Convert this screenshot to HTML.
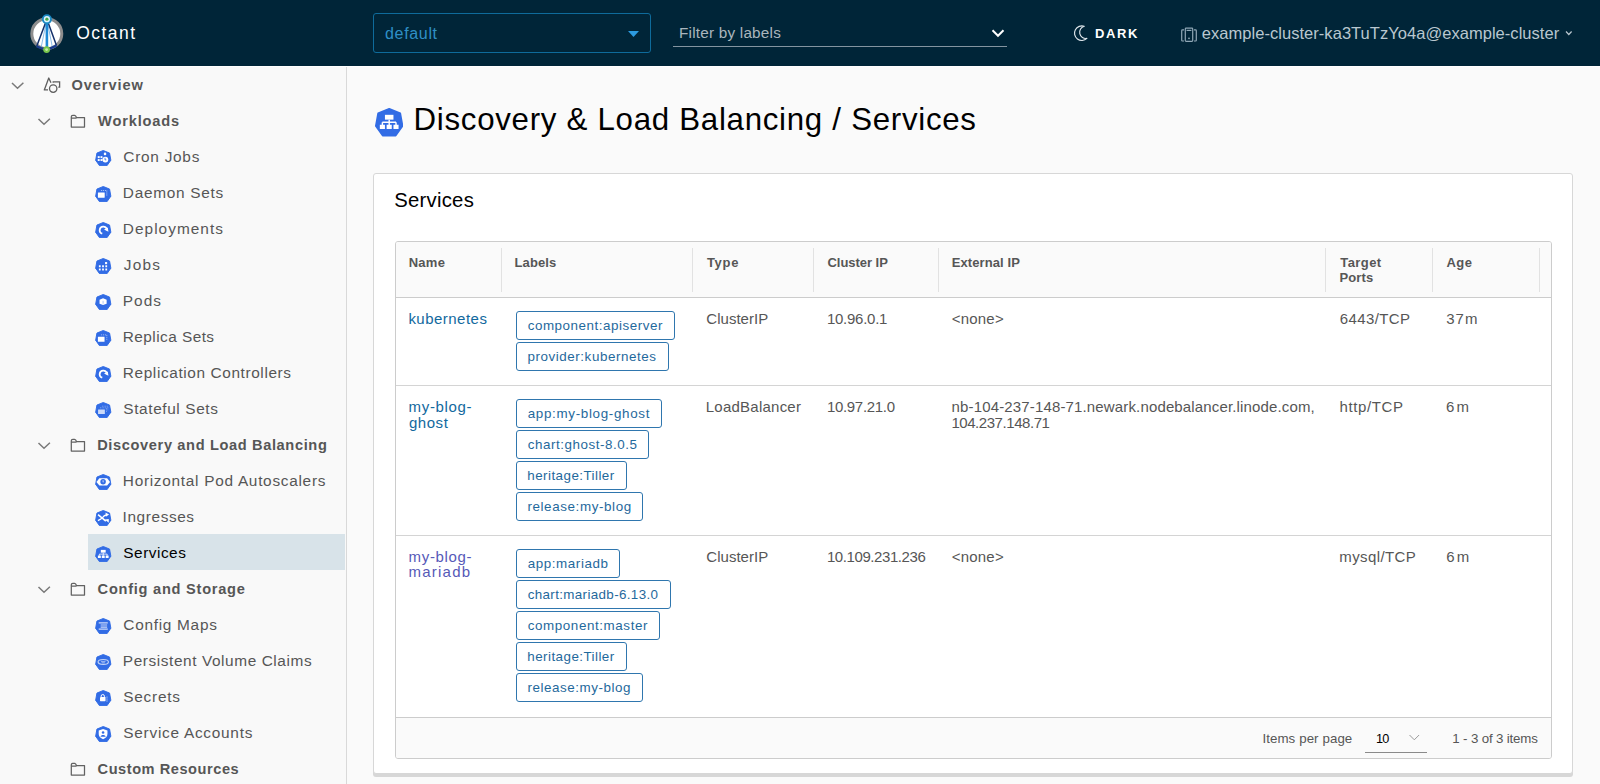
<!DOCTYPE html>
<html><head><meta charset="utf-8">
<style>
html,body{margin:0;padding:0;width:1600px;height:784px;overflow:hidden;background:#fafafa;font-family:"Liberation Sans",sans-serif;}
.ab{position:absolute;}
.t{white-space:nowrap;}
</style></head><body>
<div class="ab" style="left:0;top:0;width:1600px;height:66px;background:#002538"></div>
<svg class="ab" style="left:24px;top:8px;width:48px;height:50px" viewBox="0 0 48 50">
<circle cx="22.8" cy="25.7" r="15" fill="#fff" stroke="#8d8d8d" stroke-width="3"/>
<path d="M22.9 11.2 L17 40 M22.9 11.2 L28.5 40" stroke="#5aa0e0" stroke-width="0.7" fill="none"/>
<path d="M22.9 11.2 L12.7 38.2 M22.9 11.2 L32.5 37.6" stroke="#14316b" stroke-width="1.5" fill="none"/>
<path d="M12.7 38.2 Q22.6 44 32.5 37.6" stroke="#1a3c8c" stroke-width="2.4" fill="none"/>
<path d="M22.9 11.2 V41.4" stroke="#1f8ad6" stroke-width="2.6"/>
<circle cx="22.9" cy="11.2" r="5" fill="#1b8ac4"/>
<circle cx="22.9" cy="11.2" r="3.1" fill="#dff4ff"/>
<circle cx="22.9" cy="11.2" r="1.6" fill="#4aa84a"/>
<circle cx="22.6" cy="41.6" r="3.4" fill="#79c64c"/>
<circle cx="22.6" cy="41.6" r="1.4" fill="#c8f0a8"/>
</svg>
<div class="ab t" style="left:76.20px;top:22.44px;font-size:17.5px;line-height:22px;font-weight:normal;color:#ffffff;letter-spacing:1.462px">Octant</div>
<div class="ab" style="left:373px;top:13px;width:278px;height:40px;box-sizing:border-box;border:1px solid #0e6b9b;border-radius:3px"></div>
<div class="ab t" style="left:385.00px;top:23.86px;font-size:16px;line-height:20px;font-weight:normal;color:#2f8fc6;letter-spacing:0.668px">default</div>
<svg class="ab" style="left:627.5px;top:30.5px;width:11px;height:7px" viewBox="0 0 11 7"><path d="M0 0 H11 L5.5 6 Z" fill="#2c9be0"/></svg>
<div class="ab" style="left:673px;top:45.5px;width:334px;height:1.5px;background:#8394a0"></div>
<div class="ab t" style="left:679.05px;top:23.20px;font-size:15.3px;line-height:19px;font-weight:normal;color:#aab5bd;letter-spacing:0.208px">Filter by labels</div>
<svg class="ab" style="left:0;top:0;width:1600px;height:784px;overflow:visible;pointer-events:none"><path d="M992.5 30.3 L998 35.8 L1003.5 30.3" fill="none" stroke="#ffffff" stroke-width="2" /></svg>
<svg class="ab" style="left:1072px;top:24px;width:17px;height:19px;overflow:visible" viewBox="0 0 17 19"><path d="M12.25 2.3 A7.3 7.3 0 1 0 14.9 14.4 A6.2 6.2 0 0 1 12.25 2.3 Z" fill="none" stroke="#dfe7ec" stroke-width="1.15" stroke-linejoin="round"/></svg>
<div class="ab t" style="left:1094.90px;top:26.00px;font-size:13px;line-height:16px;font-weight:bold;color:#ffffff;letter-spacing:1.612px">DARK</div>
<svg class="ab" style="left:0;top:0;width:1600px;height:784px;overflow:visible"><g fill="none" stroke="#8fa7b6" stroke-width="1.2"><rect x="1185.3" y="28.1" width="7.4" height="13.2" rx="0.8"/><path d="M1186.6 30.4 H1191.4"/><path d="M1184 29.9 H1182.4 Q1181.7 29.9 1181.7 30.7 V40.2 Q1181.7 41 1182.4 41 H1184"/><path d="M1194 29.9 H1195.6 Q1196.3 29.9 1196.3 30.7 V40.2 Q1196.3 41 1195.6 41 H1194"/></g><circle cx="1189" cy="38.3" r="0.9" fill="#8fa7b6"/></svg>
<div class="ab t" style="left:1201.80px;top:22.53px;font-size:16.5px;line-height:21px;font-weight:normal;color:#b9c7cf;letter-spacing:0.039px">example-cluster-ka3TuTzYo4a@example-cluster</div>
<svg class="ab" style="left:0;top:0;width:1600px;height:784px;overflow:visible;pointer-events:none"><path d="M1566 31.5 L1568.8 34.5 L1571.6 31.5" fill="none" stroke="#b9c7cf" stroke-width="1.2" /></svg>
<div class="ab" style="left:0;top:66px;width:346px;height:718px;background:#f9f9f9;border-right:1px solid #d9d9d9"></div>
<div class="ab" style="left:0;top:66px;width:1600px;height:1px;background:#ffffff"></div>
<svg class="ab" style="left:0;top:0;width:1600px;height:784px;overflow:visible;pointer-events:none"><path d="M12 83 L17.5 88.3 L23.4 82.7" fill="none" stroke="#7a7a7a" stroke-width="1.5" /></svg>
<svg class="ab" style="left:40px;top:75px;width:24px;height:22px;overflow:visible" viewBox="0 0 24 22"><path d="M11 7.8 L8.75 3 L4.3 14.9 H8" fill="none" stroke="#5e5e5e" stroke-width="1.3" stroke-linejoin="round"/><path d="M13.2 7.8 V6.8 H19.6 V12.2 H18.3" fill="none" stroke="#5e5e5e" stroke-width="1.3"/><circle cx="13.2" cy="13.6" r="3.7" fill="none" stroke="#5e5e5e" stroke-width="1.3"/></svg>
<div class="ab t" style="left:71.40px;top:75.84px;font-size:14.6px;line-height:18px;font-weight:bold;color:#565656;letter-spacing:0.932px">Overview</div>
<svg class="ab" style="left:0;top:0;width:1600px;height:784px;overflow:visible;pointer-events:none"><path d="M38.5 119 L44 124.3 L49.9 118.7" fill="none" stroke="#7a7a7a" stroke-width="1.5" /></svg>
<svg class="ab" style="left:0;top:0;width:1600px;height:784px;overflow:visible;pointer-events:none"><path d="M71.3 127 V116.8 Q71.3 115.3 72.8 115.3 H74.6 Q75.8 115.3 76.5 117.5 H84.5 V127 Z M71.3 118 H76.5" fill="none" stroke="#626262" stroke-width="1.25" stroke-linejoin="round"/></svg>
<div class="ab t" style="left:98.10px;top:111.94px;font-size:14.6px;line-height:18px;font-weight:bold;color:#565656;letter-spacing:0.831px">Workloads</div>
<svg class="ab" style="left:95.2px;top:149.6px;width:16.5px;height:16.2px" viewBox="0 0 100 100"><polygon points="50,3 89,19 97,63 73,97 27,97 3,63 11,19" fill="#326ce5" stroke="#326ce5" stroke-width="6" stroke-linejoin="round"/><rect x="16" y="38" width="12" height="12" fill="#fff"/><rect x="33" y="38" width="12" height="12" fill="#fff"/><rect x="16" y="56" width="12" height="12" fill="#fff"/><rect x="33" y="56" width="12" height="12" fill="#fff"/><circle cx="61" cy="24" r="8" fill="#fff"/><circle cx="63" cy="59" r="18" fill="#fff"/><path d="M61 48v13h8" stroke="#326ce5" stroke-width="5" fill="none"/></svg>
<div class="ab t" style="left:123.30px;top:146.86px;font-size:15.4px;line-height:19px;font-weight:normal;color:#565656;letter-spacing:0.739px">Cron Jobs</div>
<svg class="ab" style="left:95.2px;top:185.6px;width:16.5px;height:16.2px" viewBox="0 0 100 100"><polygon points="50,3 89,19 97,63 73,97 27,97 3,63 11,19" fill="#326ce5" stroke="#326ce5" stroke-width="6" stroke-linejoin="round"/><rect x="17" y="40" width="42" height="32" rx="2" fill="#fff"/><path d="M36 28h36v34" fill="none" stroke="#fff" stroke-opacity="0.7" stroke-width="5" stroke-dasharray="7 5"/></svg>
<div class="ab t" style="left:122.80px;top:182.86px;font-size:15.4px;line-height:19px;font-weight:normal;color:#565656;letter-spacing:0.720px">Daemon Sets</div>
<svg class="ab" style="left:95.2px;top:221.6px;width:16.5px;height:16.2px" viewBox="0 0 100 100"><polygon points="50,3 89,19 97,63 73,97 27,97 3,63 11,19" fill="#326ce5" stroke="#326ce5" stroke-width="6" stroke-linejoin="round"/><path d="M44 72 A22 22 0 1 1 72 52" fill="none" stroke="#fff" stroke-width="11"/><path d="M55 46 L78 34 L82 60Z" fill="#fff"/></svg>
<div class="ab t" style="left:122.80px;top:218.86px;font-size:15.4px;line-height:19px;font-weight:normal;color:#565656;letter-spacing:1.033px">Deployments</div>
<svg class="ab" style="left:95.2px;top:257.6px;width:16.5px;height:16.2px" viewBox="0 0 100 100"><polygon points="50,3 89,19 97,63 73,97 27,97 3,63 11,19" fill="#326ce5" stroke="#326ce5" stroke-width="6" stroke-linejoin="round"/><rect x="23" y="45" width="11" height="12" fill="#fff"/><rect x="23" y="65" width="11" height="12" fill="#fff"/><rect x="43" y="45" width="11" height="12" fill="#fff"/><rect x="43" y="65" width="11" height="12" fill="#fff"/><rect x="63" y="45" width="11" height="12" fill="#fff"/><rect x="63" y="65" width="11" height="12" fill="#fff"/><rect x="61" y="25" width="13" height="13" fill="#fff"/></svg>
<div class="ab t" style="left:123.80px;top:254.86px;font-size:15.4px;line-height:19px;font-weight:normal;color:#565656;letter-spacing:1.190px">Jobs</div>
<svg class="ab" style="left:95.2px;top:293.6px;width:16.5px;height:16.2px" viewBox="0 0 100 100"><polygon points="50,3 89,19 97,63 73,97 27,97 3,63 11,19" fill="#326ce5" stroke="#326ce5" stroke-width="6" stroke-linejoin="round"/><path d="M49 27 L71 35 L71 60 L49 68 L27 60 L27 35 Z" fill="#fff"/><path d="M49 42 V60" stroke="#326ce5" stroke-opacity="0.6" stroke-width="4"/></svg>
<div class="ab t" style="left:122.80px;top:290.86px;font-size:15.4px;line-height:19px;font-weight:normal;color:#565656;letter-spacing:1.033px">Pods</div>
<svg class="ab" style="left:95.2px;top:329.6px;width:16.5px;height:16.2px" viewBox="0 0 100 100"><polygon points="50,3 89,19 97,63 73,97 27,97 3,63 11,19" fill="#326ce5" stroke="#326ce5" stroke-width="6" stroke-linejoin="round"/><rect x="17" y="42" width="41" height="31" rx="2" fill="#fff"/><path d="M36 30h36v32" fill="none" stroke="#fff" stroke-opacity="0.6" stroke-width="5" stroke-dasharray="7 5"/></svg>
<div class="ab t" style="left:122.80px;top:326.86px;font-size:15.4px;line-height:19px;font-weight:normal;color:#565656;letter-spacing:0.441px">Replica Sets</div>
<svg class="ab" style="left:95.2px;top:365.6px;width:16.5px;height:16.2px" viewBox="0 0 100 100"><polygon points="50,3 89,19 97,63 73,97 27,97 3,63 11,19" fill="#326ce5" stroke="#326ce5" stroke-width="6" stroke-linejoin="round"/><path d="M44 72 A22 22 0 1 1 72 52" fill="none" stroke="#fff" stroke-width="11"/><path d="M55 46 L78 34 L82 60Z" fill="#fff"/></svg>
<div class="ab t" style="left:122.80px;top:362.86px;font-size:15.4px;line-height:19px;font-weight:normal;color:#565656;letter-spacing:0.608px">Replication Controllers</div>
<svg class="ab" style="left:95.2px;top:401.6px;width:16.5px;height:16.2px" viewBox="0 0 100 100"><polygon points="50,3 89,19 97,63 73,97 27,97 3,63 11,19" fill="#326ce5" stroke="#326ce5" stroke-width="6" stroke-linejoin="round"/><rect x="18" y="46" width="42" height="28" rx="2" fill="#fff" fill-opacity="0.75"/><path d="M30 36h40v26M42 26h36v26" fill="none" stroke="#fff" stroke-opacity="0.55" stroke-width="4" stroke-dasharray="6 4"/></svg>
<div class="ab t" style="left:123.30px;top:398.86px;font-size:15.4px;line-height:19px;font-weight:normal;color:#565656;letter-spacing:0.615px">Stateful Sets</div>
<svg class="ab" style="left:0;top:0;width:1600px;height:784px;overflow:visible;pointer-events:none"><path d="M38.5 443 L44 448.3 L49.9 442.7" fill="none" stroke="#7a7a7a" stroke-width="1.5" /></svg>
<svg class="ab" style="left:0;top:0;width:1600px;height:784px;overflow:visible;pointer-events:none"><path d="M71.3 451 V440.8 Q71.3 439.3 72.8 439.3 H74.6 Q75.8 439.3 76.5 441.5 H84.5 V451 Z M71.3 442 H76.5" fill="none" stroke="#626262" stroke-width="1.25" stroke-linejoin="round"/></svg>
<div class="ab t" style="left:97.20px;top:435.94px;font-size:14.6px;line-height:18px;font-weight:bold;color:#565656;letter-spacing:0.635px">Discovery and Load Balancing</div>
<svg class="ab" style="left:95.2px;top:473.6px;width:16.5px;height:16.2px" viewBox="0 0 100 100"><polygon points="50,3 89,19 97,63 73,97 27,97 3,63 11,19" fill="#326ce5" stroke="#326ce5" stroke-width="6" stroke-linejoin="round"/><polygon points="8,49 26,27 74,27 92,49 74,71 26,71" fill="#fff"/><circle cx="49" cy="48" r="17" fill="#326ce5"/><path d="M43 40 L56 40 L49 56Z" fill="#fff" fill-opacity="0.6"/></svg>
<div class="ab t" style="left:122.80px;top:470.86px;font-size:15.4px;line-height:19px;font-weight:normal;color:#565656;letter-spacing:0.714px">Horizontal Pod Autoscalers</div>
<svg class="ab" style="left:95.2px;top:509.6px;width:16.5px;height:16.2px" viewBox="0 0 100 100"><polygon points="50,3 89,19 97,63 73,97 27,97 3,63 11,19" fill="#326ce5" stroke="#326ce5" stroke-width="6" stroke-linejoin="round"/><path d="M18 29 L66 68" stroke="#fff" stroke-width="10"/><path d="M60 58 L84 78 L84 56Z" fill="#fff"/><path d="M17 66 Q38 56 48 44 Q56 32 70 30" fill="none" stroke="#fff" stroke-width="9"/><path d="M64 16 L86 28 L66 42Z" fill="#fff"/></svg>
<div class="ab t" style="left:122.60px;top:506.86px;font-size:15.4px;line-height:19px;font-weight:normal;color:#565656;letter-spacing:0.592px">Ingresses</div>
<div class="ab" style="left:88px;top:534px;width:257px;height:36px;background:#d8e3e9"></div>
<svg class="ab" style="left:95.2px;top:545.6px;width:16.5px;height:16.2px" viewBox="0 0 100 100"><polygon points="50,3 89,19 97,63 73,97 27,97 3,63 11,19" fill="#326ce5" stroke="#326ce5" stroke-width="6" stroke-linejoin="round"/><rect x="35" y="24" width="30" height="17" fill="#fff"/><path d="M50 41v9M26 50h48M26 50v10M50 50v10M74 50v10" stroke="#fff" stroke-width="5" fill="none"/><rect x="17" y="59" width="18" height="15" fill="#fff"/><rect x="41" y="59" width="18" height="15" fill="#fff"/><rect x="65" y="59" width="18" height="15" fill="#fff"/></svg>
<div class="ab t" style="left:123.30px;top:542.86px;font-size:15.4px;line-height:19px;font-weight:normal;color:#000000;letter-spacing:0.507px">Services</div>
<svg class="ab" style="left:0;top:0;width:1600px;height:784px;overflow:visible;pointer-events:none"><path d="M38.5 587 L44 592.3 L49.9 586.7" fill="none" stroke="#7a7a7a" stroke-width="1.5" /></svg>
<svg class="ab" style="left:0;top:0;width:1600px;height:784px;overflow:visible;pointer-events:none"><path d="M71.3 595 V584.8 Q71.3 583.3 72.8 583.3 H74.6 Q75.8 583.3 76.5 585.5 H84.5 V595 Z M71.3 586 H76.5" fill="none" stroke="#626262" stroke-width="1.25" stroke-linejoin="round"/></svg>
<div class="ab t" style="left:97.60px;top:579.94px;font-size:14.6px;line-height:18px;font-weight:bold;color:#565656;letter-spacing:0.746px">Config and Storage</div>
<svg class="ab" style="left:95.2px;top:617.6px;width:16.5px;height:16.2px" viewBox="0 0 100 100"><polygon points="50,3 89,19 97,63 73,97 27,97 3,63 11,19" fill="#326ce5" stroke="#326ce5" stroke-width="6" stroke-linejoin="round"/><path d="M22 30h56M34 43h40M34 56h40M22 69h56" stroke="#fff" stroke-opacity="0.75" stroke-width="7"/></svg>
<div class="ab t" style="left:123.30px;top:614.86px;font-size:15.4px;line-height:19px;font-weight:normal;color:#565656;letter-spacing:0.715px">Config Maps</div>
<svg class="ab" style="left:95.2px;top:653.6px;width:16.5px;height:16.2px" viewBox="0 0 100 100"><polygon points="50,3 89,19 97,63 73,97 27,97 3,63 11,19" fill="#326ce5" stroke="#326ce5" stroke-width="6" stroke-linejoin="round"/><ellipse cx="50" cy="49" rx="32" ry="15" fill="none" stroke="#fff" stroke-opacity="0.7" stroke-width="7"/><path d="M36 46h28M40 54h20" stroke="#fff" stroke-opacity="0.6" stroke-width="5"/></svg>
<div class="ab t" style="left:122.80px;top:650.86px;font-size:15.4px;line-height:19px;font-weight:normal;color:#565656;letter-spacing:0.585px">Persistent Volume Claims</div>
<svg class="ab" style="left:95.2px;top:689.6px;width:16.5px;height:16.2px" viewBox="0 0 100 100"><polygon points="50,3 89,19 97,63 73,97 27,97 3,63 11,19" fill="#326ce5" stroke="#326ce5" stroke-width="6" stroke-linejoin="round"/><rect x="30" y="44" width="34" height="26" rx="3" fill="#fff"/><path d="M37 44v-6a10 10 0 0 1 20 0v6" stroke="#fff" stroke-width="6" fill="none"/><path d="M68 44h10M68 56h10M68 68h10" stroke="#fff" stroke-opacity="0.6" stroke-width="5"/></svg>
<div class="ab t" style="left:123.30px;top:686.86px;font-size:15.4px;line-height:19px;font-weight:normal;color:#565656;letter-spacing:0.749px">Secrets</div>
<svg class="ab" style="left:95.2px;top:725.6px;width:16.5px;height:16.2px" viewBox="0 0 100 100"><polygon points="50,3 89,19 97,63 73,97 27,97 3,63 11,19" fill="#326ce5" stroke="#326ce5" stroke-width="6" stroke-linejoin="round"/><path d="M49 18 L76 28 V50 C76 66 64 76 49 82 C34 76 22 66 22 50 V28 Z" fill="#fff"/><circle cx="49" cy="40" r="8" fill="#326ce5"/><path d="M33 66 C35 52 63 52 65 66Z" fill="#326ce5"/></svg>
<div class="ab t" style="left:123.30px;top:722.86px;font-size:15.4px;line-height:19px;font-weight:normal;color:#565656;letter-spacing:0.735px">Service Accounts</div>
<svg class="ab" style="left:0;top:0;width:1600px;height:784px;overflow:visible;pointer-events:none"><path d="M71.3 775 V764.8 Q71.3 763.3 72.8 763.3 H74.6 Q75.8 763.3 76.5 765.5 H84.5 V775 Z M71.3 766 H76.5" fill="none" stroke="#626262" stroke-width="1.25" stroke-linejoin="round"/></svg>
<div class="ab t" style="left:97.60px;top:759.94px;font-size:14.6px;line-height:18px;font-weight:bold;color:#565656;letter-spacing:0.537px">Custom Resources</div>
<svg class="ab" style="left:374.6px;top:108.4px;width:28.4px;height:28.4px" viewBox="0 0 100 100"><polygon points="50,3 89,19 97,63 73,97 27,97 3,63 11,19" fill="#326ce5" stroke="#326ce5" stroke-width="6" stroke-linejoin="round"/><rect x="35" y="24" width="30" height="17" fill="#fff"/><path d="M50 41v9M26 50h48M26 50v10M50 50v10M74 50v10" stroke="#fff" stroke-width="5" fill="none"/><rect x="17" y="59" width="18" height="15" fill="#fff"/><rect x="41" y="59" width="18" height="15" fill="#fff"/><rect x="65" y="59" width="18" height="15" fill="#fff"/></svg>
<div class="ab t" style="left:413.56px;top:99.92px;font-size:31.25px;line-height:39px;font-weight:normal;color:#000000;letter-spacing:0.714px">Discovery &amp; Load Balancing / Services</div>
<div class="ab" style="left:373px;top:173px;width:1200px;height:601px;box-sizing:border-box;background:#fff;border:1px solid #d7d7d7;border-radius:3px;box-shadow:0 3px 0 0 #d7d7d7"></div>
<div class="ab t" style="left:394.30px;top:188.47px;font-size:20.3px;line-height:25px;font-weight:normal;color:#000000;letter-spacing:0.244px">Services</div>
<div class="ab" style="left:395px;top:241px;width:1157px;height:518px;box-sizing:border-box;border:1px solid #cccccc;border-radius:3px;background:#fff;overflow:hidden"><div class="ab" style="left:0;top:0;width:1155px;height:55px;background:#fafafa;border-bottom:1px solid #cccccc"></div><div class="ab" style="left:0;top:143px;width:1155px;height:1px;background:#d4d4d4"></div><div class="ab" style="left:0;top:293px;width:1155px;height:1px;background:#d4d4d4"></div><div class="ab" style="left:0;top:475px;width:1155px;height:41px;background:#fafafa;border-top:1px solid #cccccc"></div></div>
<div class="ab" style="left:501.0px;top:248px;width:1px;height:44px;background:#e2e2e2"></div>
<div class="ab" style="left:692.0px;top:248px;width:1px;height:44px;background:#e2e2e2"></div>
<div class="ab" style="left:813.0px;top:248px;width:1px;height:44px;background:#e2e2e2"></div>
<div class="ab" style="left:938.0px;top:248px;width:1px;height:44px;background:#e2e2e2"></div>
<div class="ab" style="left:1325.2px;top:248px;width:1px;height:44px;background:#e2e2e2"></div>
<div class="ab" style="left:1432.0px;top:248px;width:1px;height:44px;background:#e2e2e2"></div>
<div class="ab" style="left:1538.8px;top:248px;width:1px;height:44px;background:#e2e2e2"></div>
<div class="ab t" style="left:408.70px;top:254.50px;font-size:13px;line-height:16px;font-weight:bold;color:#565656;letter-spacing:0.274px">Name</div>
<div class="ab t" style="left:514.60px;top:254.50px;font-size:13px;line-height:16px;font-weight:bold;color:#565656;letter-spacing:0.069px">Labels</div>
<div class="ab t" style="left:706.90px;top:254.50px;font-size:13px;line-height:16px;font-weight:bold;color:#565656;letter-spacing:0.718px">Type</div>
<div class="ab t" style="left:827.50px;top:254.50px;font-size:13px;line-height:16px;font-weight:bold;color:#565656;letter-spacing:-0.035px">Cluster IP</div>
<div class="ab t" style="left:951.70px;top:254.50px;font-size:13px;line-height:16px;font-weight:bold;color:#565656;letter-spacing:0.097px">External IP</div>
<div class="ab t" style="left:1340.30px;top:254.50px;font-size:13px;line-height:16px;font-weight:bold;color:#565656;letter-spacing:0.413px">Target</div>
<div class="ab t" style="left:1446.40px;top:254.50px;font-size:13px;line-height:16px;font-weight:bold;color:#565656;letter-spacing:0.485px">Age</div>
<div class="ab t" style="left:1339.60px;top:270.00px;font-size:13px;line-height:16px;font-weight:bold;color:#565656;letter-spacing:0.075px">Ports</div>
<div class="ab t" style="left:408.40px;top:309.30px;font-size:15px;line-height:19px;font-weight:normal;color:#12699e;letter-spacing:0.476px">kubernetes</div>
<div class="ab t" style="left:706.30px;top:309.30px;font-size:15px;line-height:19px;font-weight:normal;color:#565656;letter-spacing:0.028px">ClusterIP</div>
<div class="ab t" style="left:826.90px;top:309.30px;font-size:15px;line-height:19px;font-weight:normal;color:#565656;letter-spacing:-0.258px">10.96.0.1</div>
<div class="ab t" style="left:951.80px;top:309.30px;font-size:15px;line-height:19px;font-weight:normal;color:#565656;letter-spacing:0.194px">&lt;none&gt;</div>
<div class="ab t" style="left:1339.70px;top:309.30px;font-size:15px;line-height:19px;font-weight:normal;color:#565656;letter-spacing:0.410px">6443/TCP</div>
<div class="ab t" style="left:1446.20px;top:309.30px;font-size:15px;line-height:19px;font-weight:normal;color:#565656;letter-spacing:1.008px">37m</div>
<div class="ab t" style="left:408.60px;top:397.10px;font-size:15px;line-height:19px;font-weight:normal;color:#12699e;letter-spacing:0.664px">my-blog-</div>
<div class="ab t" style="left:408.90px;top:412.50px;font-size:15px;line-height:19px;font-weight:normal;color:#12699e;letter-spacing:0.568px">ghost</div>
<div class="ab t" style="left:705.80px;top:397.10px;font-size:15px;line-height:19px;font-weight:normal;color:#565656;letter-spacing:0.234px">LoadBalancer</div>
<div class="ab t" style="left:826.90px;top:397.10px;font-size:15px;line-height:19px;font-weight:normal;color:#565656;letter-spacing:-0.306px">10.97.21.0</div>
<div class="ab t" style="left:951.60px;top:397.10px;font-size:15px;line-height:19px;font-weight:normal;color:#565656;letter-spacing:0.148px">nb-104-237-148-71.newark.nodebalancer.linode.com,</div>
<div class="ab t" style="left:951.40px;top:412.50px;font-size:15px;line-height:19px;font-weight:normal;color:#565656;letter-spacing:-0.444px">104.237.148.71</div>
<div class="ab t" style="left:1339.40px;top:397.10px;font-size:15px;line-height:19px;font-weight:normal;color:#565656;letter-spacing:0.645px">http/TCP</div>
<div class="ab t" style="left:1446.00px;top:397.10px;font-size:15px;line-height:19px;font-weight:normal;color:#565656;letter-spacing:2.058px">6m</div>
<div class="ab t" style="left:408.60px;top:546.90px;font-size:15px;line-height:19px;font-weight:normal;color:#5659b8;letter-spacing:0.664px">my-blog-</div>
<div class="ab t" style="left:408.60px;top:562.30px;font-size:15px;line-height:19px;font-weight:normal;color:#5659b8;letter-spacing:1.208px">mariadb</div>
<div class="ab t" style="left:706.30px;top:546.90px;font-size:15px;line-height:19px;font-weight:normal;color:#565656;letter-spacing:0.028px">ClusterIP</div>
<div class="ab t" style="left:826.90px;top:546.90px;font-size:15px;line-height:19px;font-weight:normal;color:#565656;letter-spacing:-0.410px">10.109.231.236</div>
<div class="ab t" style="left:951.80px;top:546.90px;font-size:15px;line-height:19px;font-weight:normal;color:#565656;letter-spacing:0.194px">&lt;none&gt;</div>
<div class="ab t" style="left:1339.30px;top:546.90px;font-size:15px;line-height:19px;font-weight:normal;color:#565656;letter-spacing:0.383px">mysql/TCP</div>
<div class="ab t" style="left:1446.30px;top:546.90px;font-size:15px;line-height:19px;font-weight:normal;color:#565656;letter-spacing:2.058px">6m</div>
<div class="ab" style="left:516px;top:311.4px;width:159.2px;height:28.3px;box-sizing:border-box;border:1px solid #2f76ae;border-radius:3px"></div>
<div class="ab t" style="left:527.70px;top:316.76px;font-size:13.4px;line-height:17px;font-weight:normal;color:#1f699c;letter-spacing:0.535px">component:apiserver</div>
<div class="ab" style="left:516px;top:342.4px;width:152.6px;height:28.3px;box-sizing:border-box;border:1px solid #2f76ae;border-radius:3px"></div>
<div class="ab t" style="left:527.40px;top:347.76px;font-size:13.4px;line-height:17px;font-weight:normal;color:#1f699c;letter-spacing:0.570px">provider:kubernetes</div>
<div class="ab" style="left:516px;top:399.4px;width:146.4px;height:28.3px;box-sizing:border-box;border:1px solid #2f76ae;border-radius:3px"></div>
<div class="ab t" style="left:527.70px;top:404.76px;font-size:13.4px;line-height:17px;font-weight:normal;color:#1f699c;letter-spacing:0.678px">app:my-blog-ghost</div>
<div class="ab" style="left:516px;top:430.4px;width:133.4px;height:28.3px;box-sizing:border-box;border:1px solid #2f76ae;border-radius:3px"></div>
<div class="ab t" style="left:527.70px;top:435.76px;font-size:13.4px;line-height:17px;font-weight:normal;color:#1f699c;letter-spacing:0.550px">chart:ghost-8.0.5</div>
<div class="ab" style="left:516px;top:461.4px;width:111.0px;height:28.3px;box-sizing:border-box;border:1px solid #2f76ae;border-radius:3px"></div>
<div class="ab t" style="left:527.30px;top:466.76px;font-size:13.4px;line-height:17px;font-weight:normal;color:#1f699c;letter-spacing:0.449px">heritage:Tiller</div>
<div class="ab" style="left:516px;top:492.4px;width:127.3px;height:28.3px;box-sizing:border-box;border:1px solid #2f76ae;border-radius:3px"></div>
<div class="ab t" style="left:527.40px;top:497.76px;font-size:13.4px;line-height:17px;font-weight:normal;color:#1f699c;letter-spacing:0.609px">release:my-blog</div>
<div class="ab" style="left:516px;top:549.4px;width:104.4px;height:28.3px;box-sizing:border-box;border:1px solid #2f76ae;border-radius:3px"></div>
<div class="ab t" style="left:527.70px;top:554.76px;font-size:13.4px;line-height:17px;font-weight:normal;color:#1f699c;letter-spacing:0.586px">app:mariadb</div>
<div class="ab" style="left:516px;top:580.4px;width:154.5px;height:28.3px;box-sizing:border-box;border:1px solid #2f76ae;border-radius:3px"></div>
<div class="ab t" style="left:527.70px;top:585.76px;font-size:13.4px;line-height:17px;font-weight:normal;color:#1f699c;letter-spacing:0.353px">chart:mariadb-6.13.0</div>
<div class="ab" style="left:516px;top:611.4px;width:144.3px;height:28.3px;box-sizing:border-box;border:1px solid #2f76ae;border-radius:3px"></div>
<div class="ab t" style="left:527.70px;top:616.76px;font-size:13.4px;line-height:17px;font-weight:normal;color:#1f699c;letter-spacing:0.592px">component:master</div>
<div class="ab" style="left:516px;top:642.4px;width:111.0px;height:28.3px;box-sizing:border-box;border:1px solid #2f76ae;border-radius:3px"></div>
<div class="ab t" style="left:527.30px;top:647.76px;font-size:13.4px;line-height:17px;font-weight:normal;color:#1f699c;letter-spacing:0.449px">heritage:Tiller</div>
<div class="ab" style="left:516px;top:673.4px;width:126.5px;height:28.3px;box-sizing:border-box;border:1px solid #2f76ae;border-radius:3px"></div>
<div class="ab t" style="left:527.40px;top:678.76px;font-size:13.4px;line-height:17px;font-weight:normal;color:#1f699c;letter-spacing:0.552px">release:my-blog</div>
<div class="ab t" style="left:1262.40px;top:730.19px;font-size:13.3px;line-height:17px;font-weight:normal;color:#565656;letter-spacing:0.091px">Items per page</div>
<div class="ab t" style="left:1376.10px;top:731.35px;font-size:12.7px;line-height:16px;font-weight:normal;color:#000000;letter-spacing:-0.863px">10</div>
<svg class="ab" style="left:0;top:0;width:1600px;height:784px;overflow:visible;pointer-events:none"><path d="M1409.5 735 L1414.3 739.8 L1419.1 735" fill="none" stroke="#9a9a9a" stroke-width="1" /></svg>
<div class="ab" style="left:1365px;top:751.7px;width:62px;height:1px;background:#8a8a8a"></div>
<div class="ab t" style="left:1452.30px;top:730.19px;font-size:13.3px;line-height:17px;font-weight:normal;color:#565656;letter-spacing:-0.154px">1 - 3 of 3 items</div>
</body></html>
